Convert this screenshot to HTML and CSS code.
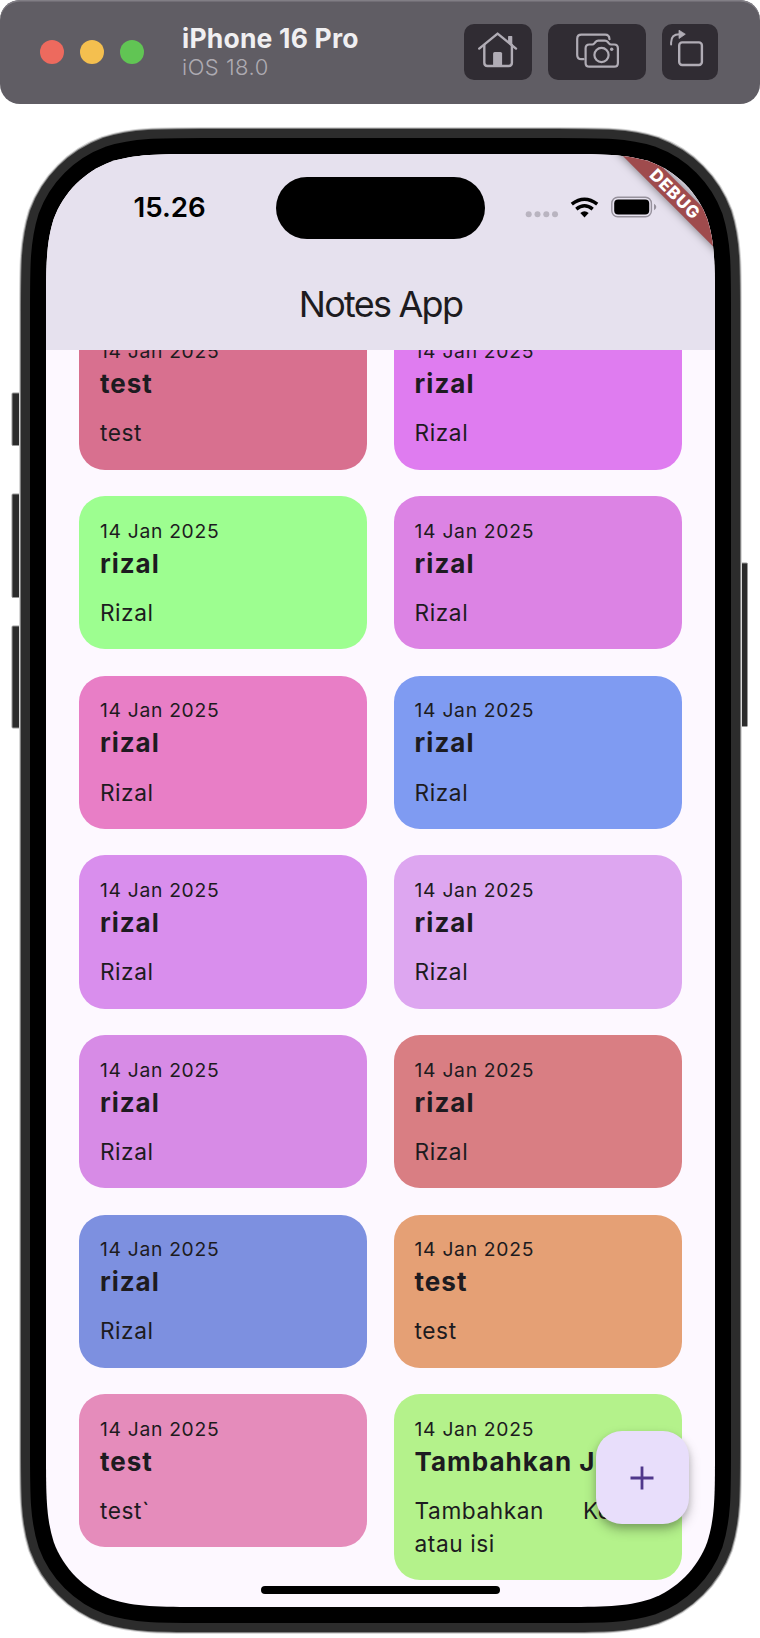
FILE: index.html
```html
<!DOCTYPE html>
<html lang="id">
<head>
<meta charset="utf-8">
<title>Notes App</title>
<link rel="stylesheet" href="styles.css">
</head>
<body>
<header class="toolbar">
  <div class="lights"><i class="light red"></i><i class="light yellow"></i><i class="light green"></i></div>
  <div class="device"><div class="device-name">iPhone 16 Pro</div><div class="device-os">iOS 18.0</div></div>
  <div class="actions">
    <div class="action home"><svg viewBox="0 0 68 56" width="68" height="56" fill="none" stroke="#b0acb5" stroke-width="2.4" stroke-linecap="round" stroke-linejoin="round"><path d="M15.2 24.6 33.6 9.6 52 24.6"/><path d="M20.3 21V38.8Q20.3 42 23.5 42H44.7Q47.9 42 47.9 38.8V21"/><path d="M44.8 12.6H47.6V21L44.8 18.5Z" fill="#b0acb5" stroke-width="1.4"/><path d="M29.1 42V29.6Q29.1 28 30.7 28H36.5Q38.1 28 38.1 29.6V42Z" fill="#b0acb5" stroke="none"/></svg></div>
    <div class="action shot"><svg viewBox="0 0 98 56" width="98" height="56" fill="none" stroke="#b0acb5" stroke-width="2.2" stroke-linecap="round" stroke-linejoin="round"><path d="M35.5 35.2H33.4Q29.2 35.2 29.2 31V14.9Q29.2 10.7 33.4 10.7H57.2Q61.2 10.7 61.5 15.2"/><path d="M41.4 20.5H44.2Q45.5 20.5 46.4 19.4L47.5 18Q48.6 16.6 50.3 16.6H57Q58.7 16.6 59.8 18L60.9 19.4Q61.8 20.5 63.1 20.5H66.1Q69.9 20.5 69.9 24.3V38.9Q69.9 42.7 66.1 42.7H41.4Q37.6 42.7 37.6 38.9V24.3Q37.6 20.5 41.4 20.5Z"/><circle cx="53.5" cy="31" r="7.1"/><circle cx="63.7" cy="25.3" r="1.7" fill="#b0acb5" stroke="none"/></svg></div>
    <div class="action rotate"><svg viewBox="0 0 56 56" width="56" height="56" fill="none" stroke="#b0acb5" stroke-width="2.4"><rect x="17.2" y="18.4" width="22.7" height="22.6" rx="3"/><path d="M9.1 20.4V18.6Q9.1 10.3 17.5 10.3" stroke-width="2" stroke-linecap="round"/><path d="M17 6.2 23.3 10.2 17 14.5Z" fill="#b0acb5" stroke-width=".8" stroke-linejoin="round"/></svg></div>
  </div>
</header>

<main class="phone">
  <svg class="bezel" width="760" height="1534" viewBox="0 0 760 1534">
    <g fill="#2b2b2b" stroke="#999" stroke-width="1"><rect x="12" y="289" width="14" height="52.5" rx="1"/><rect x="12" y="390" width="14" height="103.5" rx="1"/><rect x="12" y="522" width="14" height="102" rx="1"/><rect x="734" y="459" width="13.5" height="163.500" rx="1"/></g>
    <defs><path id="outline" d="M157.5 0H511.5C556.900 0 579.600 0 604 7.700C630.600 17.400 651.600 38.400 661.300 65C669 89.400 669 112.100 669 157.500V1295.500C669 1340.900 669 1363.600 661.300 1388C651.600 1414.600 630.600 1435.600 604 1445.300C579.600 1453 556.900 1453 511.500 1453H157.500C112.100 1453 89.400 1453 65 1445.300C38.400 1435.600 17.400 1414.600 7.700 1388C0 1363.600 0 1340.900 0 1295.500V157.500C0 112.100 0 89.400 7.700 65C17.400 38.400 38.400 17.400 65 7.700C89.400 0 112.100 0 157.500 0Z"/></defs>
    <g transform="translate(46 50)">
      <use href="#outline" stroke="#d8d8d8" stroke-width="54"/>
      <use href="#outline" stroke="#808080" stroke-width="52"/>
      <use href="#outline" stroke="#2c2c2c" stroke-width="50"/>
      <use href="#outline" stroke="#000" stroke-width="32"/>
    </g>
  </svg>
  <div class="screen">
    <section class="appbar">
      <div class="status">
        <span class="clock">15.26</span>
        <span class="island"></span>
        <svg class="indicators" width="132" height="24" viewBox="0 0 132 24">
          <g fill="#b9b4c0"><circle cx="3.700" cy="18.300" r="3"/><circle cx="12.500" cy="18.300" r="3"/><circle cx="21.300" cy="18.300" r="3"/><circle cx="30" cy="18.300" r="3"/></g>
          <g transform="translate(0 -.5)">
          <g fill="none" stroke="#000" stroke-width="3.500"><path d="M46.800 8.700Q59.500 -1.300 72.200 8.700"/><path d="M51.300 13.600Q59.500 7 67.700 13.600"/></g>
          <path d="M55.300 17.500Q59.500 14.200 63.700 17.500L59.500 22Z"/>
          <rect x="86.800" y="1.700" width="39.600" height="19.600" rx="6" fill="none" stroke="#96919c" stroke-width="1.400"/>
          <rect x="89.200" y="4" width="35" height="15" rx="4"/>
          <path d="M129 8.300Q131.300 9.500 131.300 11.500T129 14.700Z" fill="#96919c"/>
          </g>
        </svg>
      </div>
      <h1 class="title">Notes App</h1>
    </section>
    <section class="scroller">
      <div class="notes">
        <article class="note rose"><time>14 Jan 2025</time><h2>test</h2><p>test</p></article>
        <article class="note fuchsia"><time>14 Jan 2025</time><h2>rizal</h2><p>Rizal</p></article>
        <article class="note mint"><time>14 Jan 2025</time><h2>rizal</h2><p>Rizal</p></article>
        <article class="note orchid"><time>14 Jan 2025</time><h2>rizal</h2><p>Rizal</p></article>
        <article class="note pink"><time>14 Jan 2025</time><h2>rizal</h2><p>Rizal</p></article>
        <article class="note blue"><time>14 Jan 2025</time><h2>rizal</h2><p>Rizal</p></article>
        <article class="note violet"><time>14 Jan 2025</time><h2>rizal</h2><p>Rizal</p></article>
        <article class="note lilac"><time>14 Jan 2025</time><h2>rizal</h2><p>Rizal</p></article>
        <article class="note purple"><time>14 Jan 2025</time><h2>rizal</h2><p>Rizal</p></article>
        <article class="note coral"><time>14 Jan 2025</time><h2>rizal</h2><p>Rizal</p></article>
        <article class="note indigo"><time>14 Jan 2025</time><h2>rizal</h2><p>Rizal</p></article>
        <article class="note orange"><time>14 Jan 2025</time><h2>test</h2><p>test</p></article>
        <article class="note blush"><time>14 Jan 2025</time><h2>test</h2><p>test`</p></article>
        <article class="note lime"><time>14 Jan 2025</time><h2>Tambahkan J</h2><p>Tambahkan <span class="tail">Ko</span><br>atau isi</p></article>
      </div>
    </section>
    <div class="banner">DEBUG</div>
    <div class="fab"><svg width="24" height="24" viewBox="0 0 24 24" stroke="#4f378b" stroke-width="2.800"><path d="M12 .5V23.500M.5 12H23.500"/></svg></div>
    <div class="home-bar"></div>
  </div>
</main>
</body>
</html>
```
FILE: styles.css
```css
* { box-sizing: border-box; }
body { margin: 0; background: #fff; font-family: Inter, "Liberation Sans", sans-serif; }

.toolbar {
  display: flex; align-items: center; height: 104px; padding: 0 42px 0 40px;
  background: #605d64; border-radius: 20px; box-shadow: inset 0 1.5px 0 #817e85;
}
.lights { display: flex; gap: 16px; }
.light { width: 24px; height: 24px; border-radius: 50%; }
.red { background: #ed6a5e; }
.yellow { background: #f4bf4f; }
.green { background: #61c554; }
.device { margin: -1px 0 0 38px; white-space: nowrap; }
.device-name { color: #f0eff1; font-size: 26.5px; font-weight: 700; line-height: 32px; letter-spacing: .2px; }
.device-os { color: #aeabb2; font-size: 22px; font-weight: 300; line-height: 27px; letter-spacing: .5px; }
.actions { display: flex; gap: 16px; margin-left: auto; }
.action { height: 56px; background: #302c33; border-radius: 10px; }
.action svg { display: block; }
.home { width: 68px; }
.shot { width: 98px; }
.rotate { width: 56px; }

.phone { position: relative; height: 1534px; padding: 50px 45px 31px 46px; }
.bezel { position: absolute; left: 0; top: 0; }
.screen {
  position: relative; display: flex; flex-direction: column; width: 669px; height: 1453px;
  background: #fdf8ff; color: #1d1b20;
  clip-path: path("M157.5 0H511.5C556.9 0 579.6 0 604 7.7C630.6 17.4 651.6 38.4 661.3 65C669 89.4 669 112.1 669 157.5V1295.5C669 1340.9 669 1363.6 661.3 1388C651.6 1414.600 630.6 1435.6 604 1445.3C579.6 1453 556.9 1453 511.5 1453H157.5C112.1 1453 89.4 1453 65 1445.3C38.4 1435.6 17.4 1414.6 7.7 1388C0 1363.6 0 1340.9 0 1295.5V157.5C0 112.1 0 89.4 7.7 65C17.4 38.4 38.4 17.4 65 7.700C89.4 0 112.1 0 157.5 0Z");
}
.appbar { flex: none; height: 196px; padding-top: 23px; background: #e6e1ee; }
.status { display: flex; align-items: center; height: 62px; padding-left: 87.5px; color: #000; }
.clock { width: 142.5px; margin-top: -2px; font-size: 27.7px; font-weight: 600; line-height: 34px; white-space: nowrap; }
.island { width: 209px; height: 62px; background: #000; border-radius: 31px; }
.indicators { margin-left: 39.7px; }
.title { margin: 42px 0 0; text-align: center; font-size: 36px; font-weight: 400; line-height: 46px; letter-spacing: -1.75px; }

.scroller { flex: 1; overflow: hidden; }
.notes {
  display: grid; grid-template-columns: 288px 288px; align-items: start;
  column-gap: 26.700px; row-gap: 26.4px; margin: -33.3px 0 0 33.3px;
}
.note { min-height: 153.200px; padding: 20.5px 20px 19.5px 20.6px; border-radius: 26px; white-space: nowrap; }
.note time { display: block; font-size: 19.3px; line-height: 29px; letter-spacing: .7px; }
.note h2 { margin: 0; font-size: 26px; font-weight: 700; line-height: 36.600px; letter-spacing: 1px; }
.note p { margin: 13.700px 0 0; font-size: 22.700px; line-height: 33.400px; letter-spacing: .55px; }
.tail { margin-left: 32px; }
.rose { background: #d8708f; }
.fuchsia { background: #df7cf0; }
.mint { background: #9dfe90; }
.orchid { background: #dc83e4; }
.pink { background: #e87ec6; }
.blue { background: #7f9bf2; }
.violet { background: #d98eed; }
.lilac { background: #dda6f0; }
.purple { background: #d78be6; }
.coral { background: #d97e83; }
.indigo { background: #7d90e0; }
.orange { background: #e5a075; }
.blush { background: #e58cbb; }
.lime { background: #b4f28b; }

.banner {
  position: absolute; left: 529px; top: 29.800px; width: 200px; height: 20px;
  transform: rotate(45deg); background: #9f4b4d; box-shadow: 0 0 10px rgba(0,0,0,.5);
  color: #fff; font-size: 17px; font-weight: 800; line-height: 20px; letter-spacing: .8px; text-align: center;
}
.fab {
  position: absolute; left: 549.500px; top: 1277px; display: grid; place-items: center;
  width: 93px; height: 93px; border-radius: 26px; background: #e8defb;
  box-shadow: 0 6px 12px rgba(0,0,0,.25), 0 3px 6px rgba(0,0,0,.12);
}
.home-bar { position: absolute; left: 215px; top: 1431.500px; width: 239px; height: 8px; border-radius: 4px; background: #000; }
```
